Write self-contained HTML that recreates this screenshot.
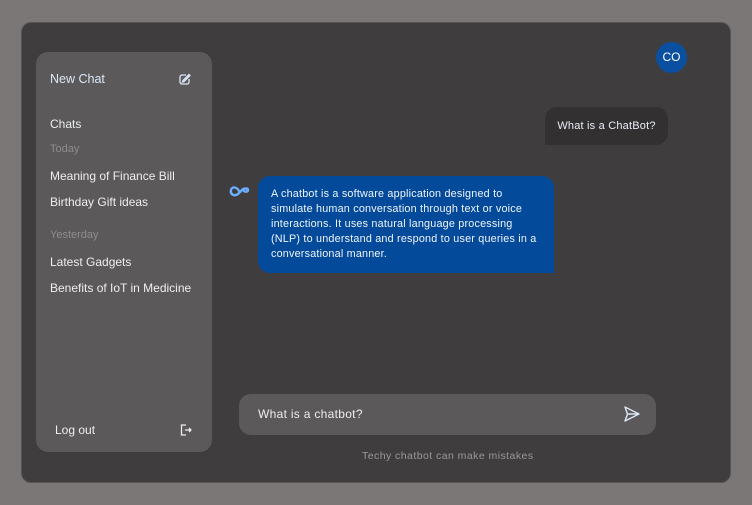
<!DOCTYPE html>
<html><head><style>
*{margin:0;padding:0;box-sizing:border-box}
body{width:752px;height:505px;background:#7b7777;font-family:"Liberation Sans",sans-serif;position:relative;overflow:hidden}
.main{position:absolute;left:21px;top:22px;width:710px;height:461px;background:#3f3d3e;border-radius:10px;border:1px solid #555}
.side{position:absolute;left:36px;top:52px;width:176px;height:400px;background:#5b595a;border-radius:12px}
.t{position:absolute;font-size:12px;color:#eee;white-space:nowrap}
.g{color:#8e8c8d;font-size:11px}
</style></head><body>
<div class="main"></div>
<div class="side"></div>
<div class="t" style="left:50px;top:72px;color:#dce8f8;font-size:12.5px">New Chat</div>
<svg style="position:absolute;left:178px;top:72px" width="14" height="14" viewBox="0 0 14 14" fill="none" stroke="#dce8f8" stroke-width="1.3"><path d="M11 2.5 5 8.5 4.5 10 6 9.5 12 3.5Z"/><path d="M8 3H4a2 2 0 0 0-2 2v5a2 2 0 0 0 2 2h5a2 2 0 0 0 2-2V7"/></svg>
<div class="t" style="left:50px;top:117px">Chats</div>
<div class="t g" style="left:50px;top:143px">Today</div>
<div class="t" style="left:50px;top:169px">Meaning of Finance Bill</div>
<div class="t" style="left:50px;top:195px">Birthday Gift ideas</div>
<div class="t g" style="left:50px;top:229px">Yesterday</div>
<div class="t" style="left:50px;top:255px">Latest Gadgets</div>
<div class="t" style="left:50px;top:281px">Benefits of IoT in Medicine</div>
<div class="t" style="left:55px;top:423px">Log out</div>
<svg style="position:absolute;left:179px;top:423px" width="14" height="14" viewBox="0 0 14 14" fill="none" stroke="#eee" stroke-width="1.3"><path d="M7 2H2.5v10H7"/><path d="M6 7h6M10 5l2 2-2 2"/></svg>
<div style="position:absolute;left:656px;top:42px;width:31px;height:31px;border-radius:50%;background:#0a4fa0;color:#fff;font-size:12px;text-align:center;line-height:31px">CO</div>
<div style="position:absolute;left:545px;top:107px;width:123px;height:38px;background:#323031;border-radius:12px 12px 12px 0;color:#e8eef8;font-size:11px;line-height:38px;text-align:center;letter-spacing:0.2px">What is a ChatBot?</div>
<svg style="position:absolute;left:229px;top:183px" width="22" height="16" viewBox="0 0 22 16" fill="none"><path d="M10 8C8 4 3 3 2 7s3 7 7 4l4-4c2-2 6-2 6 0s-3 2-4 1" stroke="#6ab0ff" stroke-width="2.4" stroke-linecap="round"/></svg>
<div style="position:absolute;left:258px;top:176px;width:296px;height:97px;background:#044a9a;border-radius:12px 12px 0 12px;color:#f0f4fb;font-size:10.8px;line-height:15px;padding:11px 0 0 13px;white-space:nowrap;letter-spacing:0.2px">A chatbot is a software application designed to<br>simulate human conversation through text or voice<br>interactions. It uses natural language processing<br>(NLP) to understand and respond to user queries in a<br>conversational manner.</div>
<div style="position:absolute;left:239px;top:394px;width:417px;height:41px;background:#5b595a;border-radius:12px"></div>
<div class="t" style="left:258px;top:407px;font-size:12px;letter-spacing:0.3px">What is a chatbot?</div>
<svg style="position:absolute;left:623px;top:405px" width="18" height="18" viewBox="0 0 18 18" fill="none" stroke="#dce8f8" stroke-width="1.4" stroke-linejoin="round"><path d="M2 2l14 7-14 7 2.5-7Z M4.5 9H16"/></svg>
<div class="t" style="left:362px;top:450px;color:#9a9899;font-size:10.5px;letter-spacing:0.45px">Techy chatbot can make mistakes</div>
</body></html>
